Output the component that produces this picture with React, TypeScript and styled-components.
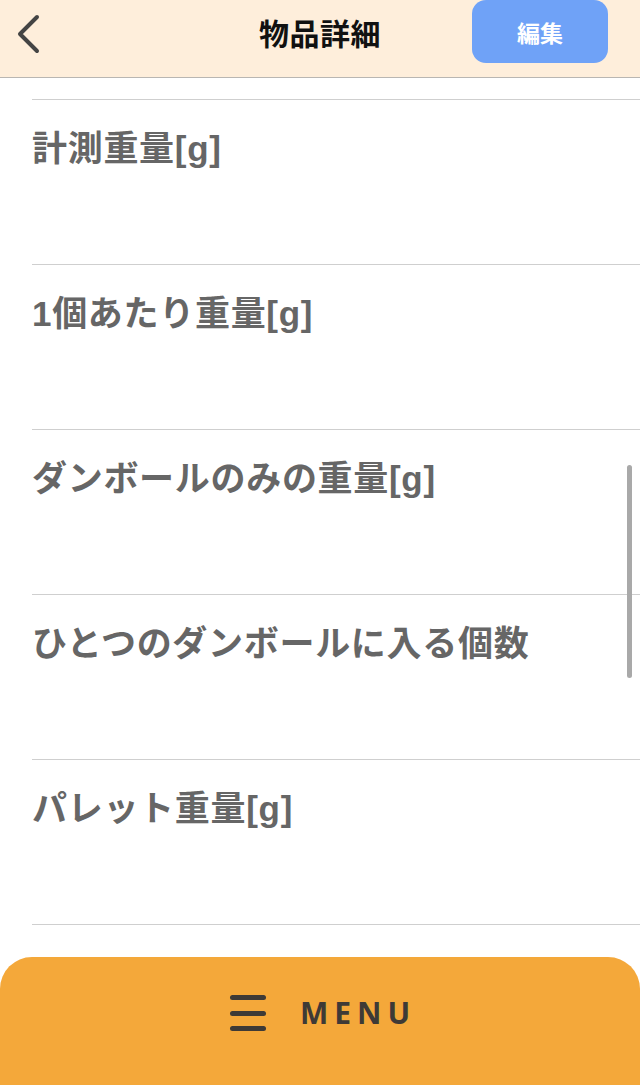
import React from 'react';
import styled, { createGlobalStyle } from 'styled-components';

const GlobalStyle = createGlobalStyle`
  html, body {
    margin: 0;
    padding: 0;
    background: #fff;
  }
  body {
    font-family: "Noto Sans CJK JP", "Noto Sans", sans-serif;
  }
`;

const Screen = styled.div`
  width: 640px;
  height: 1085px;
  display: flex;
  flex-direction: column;
  overflow: hidden;
  background: #fff;
`;

const Header = styled.header`
  height: 77px;
  flex-shrink: 0;
  display: grid;
  grid-template-columns: 1fr auto 1fr;
  align-items: center;
  background: #feeedb;
  border-bottom: 1px solid #b9b6b2;
`;

const BackButton = styled.button`
  justify-self: start;
  width: 60px;
  height: 64px;
  margin-top: -10px;
  padding: 0 0 0 16px;
  border: none;
  background: none;
  display: flex;
  align-items: center;
`;

const Title = styled.h1`
  margin: 0 0 14px;
  font-size: 30px;
  font-weight: 700;
  color: #111;
  letter-spacing: 0.5px;
`;

const EditButton = styled.button`
  justify-self: end;
  align-self: start;
  width: 136px;
  height: 63px;
  margin-right: 32px;
  border: none;
  border-radius: 14px;
  background: #6fa2f7;
  color: #fff;
  font-family: "Noto Sans CJK JP", sans-serif;
  font-size: 23px;
  font-weight: 700;
`;

const Content = styled.main`
  flex: 1;
  position: relative;
  overflow: hidden;
  padding-top: 21px;
`;

const Row = styled.div`
  height: 165px;
  margin-left: 32px;
  border-top: 1px solid #cfcfcf;
  padding-top: 27px;
  box-sizing: border-box;
`;

const Label = styled.div`
  font-family: "Liberation Sans", "Noto Sans CJK JP", sans-serif;
  font-size: 35px;
  line-height: 44px;
  font-weight: 700;
  color: #666;
  letter-spacing: 0.7px;
`;

const ScrollThumb = styled.div`
  position: absolute;
  right: 8px;
  top: 387px;
  width: 5px;
  height: 213px;
  border-radius: 3px;
  background: #a9a9a9;
`;

const Footer = styled.footer`
  height: 128px;
  flex-shrink: 0;
  background: #f4a83a;
  border-radius: 32px 32px 0 0;
  display: flex;
  justify-content: center;
  align-items: flex-start;
  padding-top: 36px;
  padding-left: 6px;
  box-sizing: border-box;
  gap: 34px;
`;

const MenuIcon = styled.div`
  width: 36px;
  height: 40px;
  display: flex;
  flex-direction: column;
  justify-content: space-between;
  padding: 2px 0;
  box-sizing: border-box;
`;

const MenuBar = styled.span`
  display: block;
  height: 5px;
  border-radius: 3px;
  background: #3e3a36;
`;

const MenuText = styled.span`
  font-family: "Noto Sans", sans-serif;
  font-size: 30px;
  line-height: 40px;
  font-weight: 700;
  letter-spacing: 6px;
  color: #3e3a36;
`;

const labels = [
  '計測重量[g]',
  '1個あたり重量[g]',
  'ダンボールのみの重量[g]',
  'ひとつのダンボールに入る個数',
  'パレット重量[g]',
  '',
];

export default function App() {
  return (
    <>
      <GlobalStyle />
      <Screen>
        <Header>
          <BackButton aria-label="戻る">
            <svg width="26" height="40" viewBox="0 0 26 40">
              <path
                d="M21 3 L4 20 L21 37"
                fill="none"
                stroke="#444"
                strokeWidth="4"
                strokeLinecap="round"
                strokeLinejoin="round"
              />
            </svg>
          </BackButton>
          <Title>物品詳細</Title>
          <EditButton>編集</EditButton>
        </Header>
        <Content>
          {labels.map((l, i) => (
            <Row key={i}>
              <Label>{l}</Label>
            </Row>
          ))}
          <ScrollThumb />
        </Content>
        <Footer>
          <MenuIcon>
            <MenuBar />
            <MenuBar />
            <MenuBar />
          </MenuIcon>
          <MenuText>MENU</MenuText>
        </Footer>
      </Screen>
    </>
  );
}
